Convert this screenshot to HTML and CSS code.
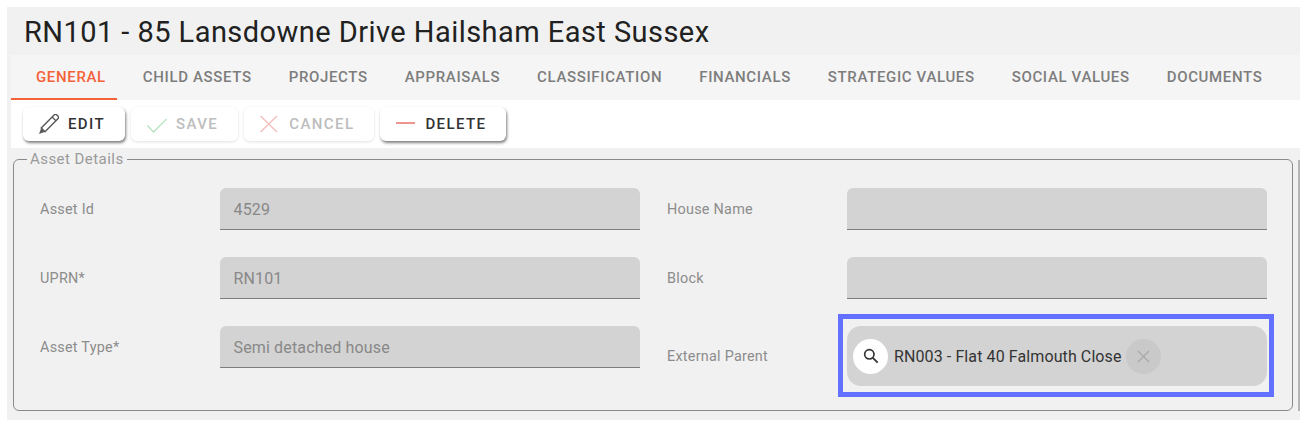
FILE: index.html
```html
<!DOCTYPE html>
<html lang="en">
<head>
    <meta charset="UTF-8">
    <title>RN101 - 85 Lansdowne Drive Hailsham East Sussex</title>
    <link rel="stylesheet" href="styles.css">
</head>
<body>
    <div class="page">
        <h1 class="page-title">RN101 - 85 Lansdowne Drive Hailsham East Sussex</h1>

        <div class="tabs">
            <a class="tab active">General</a>
            <a class="tab">Child Assets</a>
            <a class="tab">Projects</a>
            <a class="tab">Appraisals</a>
            <a class="tab">Classification</a>
            <a class="tab">Financials</a>
            <a class="tab">Strategic Values</a>
            <a class="tab">Social Values</a>
            <a class="tab">Documents</a>
        </div>

        <div class="toolbar">
            <button class="btn">
                <svg class="btn-icon" viewBox="1 2 18 18"><path d="M3 14.5L14.6 2.9a1.8 1.8 0 0 1 2.5 0l.9.9a1.8 1.8 0 0 1 0 2.5L6.4 17.9z" fill="none" stroke="#5a5a5a" stroke-width="1.3"/><path d="M12.8 4.7l3.4 3.4" stroke="#5a5a5a" stroke-width="1.1"/><path d="M3 14.5L1 20l5.4-2.1z" fill="#5a5a5a"/></svg>
                Edit
            </button>
            <button class="btn" disabled>
                <svg class="btn-icon" viewBox="0 0 20 20"><path d="M0.5 11.5L6.5 18L19.5 5" fill="none" stroke="#b9e2c4" stroke-width="1.3"/></svg>
                Save
            </button>
            <button class="btn" disabled>
                <svg class="btn-icon" viewBox="0 0 20 20"><path d="M0.5 2L17 18M17 2L0.5 18" fill="none" stroke="#f5c0bd" stroke-width="1.4"/></svg>
                Cancel
            </button>
            <button class="btn">
                <svg class="btn-icon" viewBox="0 0 20 20"><path d="M0 9H19" fill="none" stroke="#e8726c" stroke-width="1.5"/></svg>
                Delete
            </button>
        </div>

        <div class="content">
            <fieldset class="details">
                <legend>Asset Details</legend>
                <div class="form-grid">
                    <div class="field">
                        <label>Asset Id</label>
                        <div class="input">4529</div>
                    </div>
                    <div class="field">
                        <label>House Name</label>
                        <div class="input"></div>
                    </div>
                    <div class="field">
                        <label>UPRN*</label>
                        <div class="input">RN101</div>
                    </div>
                    <div class="field">
                        <label>Block</label>
                        <div class="input"></div>
                    </div>
                    <div class="field">
                        <label>Asset Type*</label>
                        <div class="input">Semi detached house</div>
                    </div>
                    <div class="field">
                        <label>External Parent</label>
                        <div class="highlight">
                            <div class="lookup">
                                <span class="round-btn search">
                                    <svg viewBox="0 0 24 24" width="20" height="20"><circle cx="10" cy="10" r="5.6" fill="none" stroke="#333" stroke-width="2"/><path d="M14.2 14.2L20 20" stroke="#333" stroke-width="2.2"/></svg>
                                </span>
                                <span class="lookup-text">RN003 - Flat 40 Falmouth Close</span>
                                <span class="round-btn clear">
                                    <svg viewBox="0 0 24 24" width="19" height="19"><path d="M5 5l14 14M19 5L5 19" fill="none" stroke="#a9a9a9" stroke-width="1.6"/></svg>
                                </span>
                            </div>
                        </div>
                    </div>
                </div>
            </fieldset>
            <div class="scroll-line"></div>
        </div>
    </div>
</body>
</html>
```

FILE: styles.css
```css
* {
    margin: 0;
    padding: 0;
    box-sizing: border-box;
}

body {
    font-family: Roboto, "Liberation Sans", sans-serif;
    background: #fff;
    padding: 7px 9px 11px 7px;
}

.page {
    background: #f1f1f1;
    height: 413px;
    padding-left: 4px;
}

.page-title {
    height: 48px;
    padding: 8px 0 0 13px;
    font-size: 29px;
    line-height: 34px;
    font-weight: 400;
    letter-spacing: 0.45px;
    color: #212121;
}

.tabs {
    display: flex;
    height: 45px;
    gap: 1px;
    background: #f5f5f5;
}

.tab {
    height: 45px;
    padding: 0 11px 0 25px;
    line-height: 45px;
    font-size: 15px;
    font-weight: 500;
    letter-spacing: 0.645px;
    text-transform: uppercase;
    color: #7d7d7d;
    border-bottom: 2px solid transparent;
}

.tab.active {
    color: #f4623a;
    border-bottom-color: #f4623a;
}

.toolbar {
    display: flex;
    gap: 6px;
    height: 48px;
    padding: 7px 0 0 12px;
    background: #fff;
}

.btn {
    display: flex;
    align-items: center;
    gap: 9px;
    height: 34px;
    padding: 0 20px 0 16px;
    border: none;
    border-radius: 6px;
    background: #fff;
    font-family: inherit;
    font-size: 15px;
    font-weight: 500;
    letter-spacing: 1.4px;
    text-transform: uppercase;
    color: #333;
    box-shadow: 1px 2px 3px rgba(0,0,0,0.5);
}

.btn:disabled {
    color: #bdbdbd;
    box-shadow: 0 1px 3px rgba(0,0,0,0.12);
}

.btn-icon {
    width: 20px;
    height: 20px;
    flex-shrink: 0;
}

.content {
    position: relative;
    padding-top: 1px;
}

.scroll-line {
    position: absolute;
    top: 12px;
    bottom: 0;
    right: 0;
    width: 2px;
    background: #b4b4b4;
}

.details {
    height: 262px;
    margin: 0 7px 0 2px;
    padding: 0 25px 0 26px;
    border: 1px solid #8a8a8a;
    border-radius: 6px;
}

.details legend {
    margin-left: -13px;
    padding: 0 3px;
    font-size: 15px;
    line-height: 20px;
    letter-spacing: 0.45px;
    color: #9a9a9a;
}

.form-grid {
    display: grid;
    grid-template-columns: 600px 600px;
    column-gap: 27px;
    row-gap: 27px;
    align-items: start;
    padding-top: 19px;
}

.field {
    display: flex;
    align-items: center;
}

.field label {
    width: 179.5px;
    flex-shrink: 0;
    font-size: 14.4px;
    letter-spacing: 0.25px;
    color: #8c8c8c;
}

.input {
    flex: 1;
    height: 42px;
    padding: 0 14px;
    line-height: 43px;
    font-size: 16px;
    letter-spacing: 0.15px;
    color: #888;
    background: #d3d3d3;
    border-bottom: 1px solid #7d7d7d;
    border-radius: 6px 6px 0 0;
}

.highlight {
    flex: 1;
    height: 83px;
    margin: -12px -7px -11px -8.5px;
    padding: 7px 2px 5px 4px;
    border: 5px solid #6470ff;
}

.lookup {
    display: flex;
    align-items: center;
    height: 60px;
    padding: 0 6px;
    background: #d3d3d3;
    border-radius: 14px;
}

.round-btn {
    display: flex;
    align-items: center;
    justify-content: center;
    width: 35px;
    height: 35px;
    border-radius: 50%;
    flex-shrink: 0;
}

.search {
    background: #fff;
}

.clear {
    background: #c9c9c9;
    margin-left: 4px;
}

.lookup-text {
    margin-left: 6px;
    font-size: 16px;
    letter-spacing: 0.1px;
    color: #333;
}
```
